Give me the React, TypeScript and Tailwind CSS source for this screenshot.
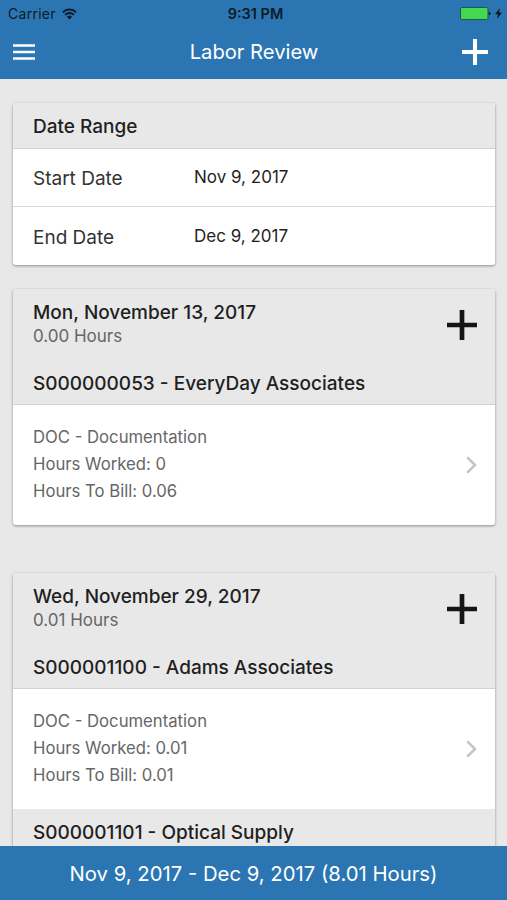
import React from 'react'

interface Entry {
    customer: string;
    worked?: string;
    billed?: string;
}

interface Day {
    date: string;
    hours: string;
    entries: Entry[];
}

const days: Day[] = [
    {
        date: "Mon, November 13, 2017",
        hours: "0.00 Hours",
        entries: [{ customer: "S000000053 - EveryDay Associates", worked: "0", billed: "0.06" }],
    },
    {
        date: "Wed, November 29, 2017",
        hours: "0.01 Hours",
        entries: [
            { customer: "S000001100 - Adams Associates", worked: "0.01", billed: "0.01" },
            { customer: "S000001101 - Optical Supply" },
        ],
    },
]

const Plus = ({ className }: { className: string }) => (
    <svg className={className} viewBox="0 0 30 30" fill="none" stroke="currentColor" strokeWidth="4.7">
        <path d="M15 0V30M0 15H30" />
    </svg>
)

const StatusBar = () => (
    <div className="flex h-[27px] items-center text-[14px] text-[#0b1a26]">
        <div className="flex flex-1 items-center gap-[6px] pl-2">
            <span className="tracking-[0.02em]">Carrier</span>
            <svg width="15" height="12" viewBox="0 0 15 12" fill="none" stroke="currentColor" strokeWidth="1.9">
                <path d="M.8 4.3a9.5 9.5 0 0 1 13.4 0M3.1 6.9a6.2 6.2 0 0 1 8.8 0" />
                <path d="M4.9 8.8a3.7 3.7 0 0 1 5.2 0L7.5 11.5z" fill="currentColor" stroke="none" />
            </svg>
        </div>
        <span className="pt-px pl-px text-[14.5px] font-semibold">9:31 PM</span>
        <div className="flex flex-1 items-center justify-end gap-1 pr-[5px]">
            <svg width="31" height="13" viewBox="0 0 31 13">
                <rect x="0.5" y="0.5" width="27.5" height="12" rx="1.5" fill="#44d74f" stroke="#1c5a50" />
                <path d="M28.8 4.7q1.8 0 1.8 1.8t-1.8 1.8z" fill="#0b1a26" />
            </svg>
            <svg width="7" height="11" viewBox="0 0 7 11" fill="currentColor">
                <path d="M5 0L0 6.3h3L2 11l5-6.5H4z" />
            </svg>
        </div>
    </div>
)

const DateRow = ({ label, value }: { label: string; value: string }) => (
    <div className="flex h-[58px] items-center pt-[5px] pl-5">
        <span className="w-[161px] pb-px text-[19px] text-[#333]">{label}</span>
        <span className="pb-1 text-[17px]">{value}</span>
    </div>
)

const EntryRow = ({ customer, worked, billed }: Entry) => (
    <>
        <div className="flex h-[45px] items-center border-b border-[#d2d2d2] bg-[#e8e8e8] pt-1 pl-5 text-[19px] font-medium">{customer}</div>
        {worked && (
            <div className="flex h-[120px] items-center justify-between pr-[18px] pl-5 text-[16.7px] leading-[27px] text-[#666]">
                <div className="pb-px">
                    <p>DOC - Documentation</p>
                    <p>Hours Worked: {worked}</p>
                    <p>Hours To Bill: {billed}</p>
                </div>
                <svg width="11" height="18" viewBox="0 0 11 18" fill="none" stroke="#c4c4c6" strokeWidth="2.5">
                    <path d="M1.3 1.3L9 9l-7.7 7.7" />
                </svg>
            </div>
        )}
    </>
)

const DayCard = ({ date, hours, entries }: Day) => (
    <section className="shrink-0 overflow-hidden rounded-[3px] bg-white shadow-[0_1px_3px_rgba(0,0,0,0.4)]">
        <div className="flex h-[71px] items-center justify-between bg-[#e8e8e8] pr-[18px] pl-5">
            <div>
                <h2 className="text-[19px] leading-6 font-medium">{date}</h2>
                <p className="-mt-px text-[17px] leading-6 text-[#666]">{hours}</p>
            </div>
            <Plus className="size-[30px] text-[#151515]" />
        </div>
        {entries.map(entry => <EntryRow key={entry.customer} {...entry} />)}
    </section>
)

const App = () => {
    return (
        <div className="flex h-[900px] w-[507px] flex-col overflow-hidden bg-[#e8e8e8] font-['Inter','Liberation_Sans',sans-serif] text-[#1f1f1f]">
            <header className="h-[79px] shrink-0 bg-[#2b76b2]">
                <StatusBar />
                <div className="grid h-[50px] grid-cols-[1fr_auto_1fr] items-center pr-[19px] pl-[13px] text-white">
                    <svg width="22" height="16" viewBox="0 0 22 16" stroke="currentColor" strokeWidth="2.3">
                        <path d="M0 1.5H22M0 8H22M0 14.5H22" />
                    </svg>
                    <h1 className="pt-px pl-[7px] text-[20.2px]">Labor Review</h1>
                    <Plus className="size-[26px] justify-self-end" />
                </div>
            </header>
            <main className="flex min-h-0 flex-1 flex-col overflow-hidden pt-6 pr-3 pl-[13px]">
                <section className="mb-6 shrink-0 overflow-hidden rounded-[3px] bg-white shadow-[0_1px_3px_rgba(0,0,0,0.4)]">
                    <h2 className="flex h-[46px] items-center border-b border-[#d2d2d2] bg-[#e8e8e8] pt-[3px] pl-5 text-[19px] font-medium">Date Range</h2>
                    <div className="divide-y divide-[#d8d8d8]">
                        <DateRow label="Start Date" value="Nov 9, 2017" />
                        <DateRow label="End Date" value="Dec 9, 2017" />
                    </div>
                </section>
                <div className="flex shrink-0 flex-col gap-12">
                    {days.map(day => <DayCard key={day.date} {...day} />)}
                </div>
            </main>
            <footer className="flex h-[54px] shrink-0 items-center justify-center bg-[#2b76b2] pt-0.5 text-[20.3px] text-white">
                Nov 9, 2017 - Dec 9, 2017 (8.01 Hours)
            </footer>
        </div>
    )
}

export default App
